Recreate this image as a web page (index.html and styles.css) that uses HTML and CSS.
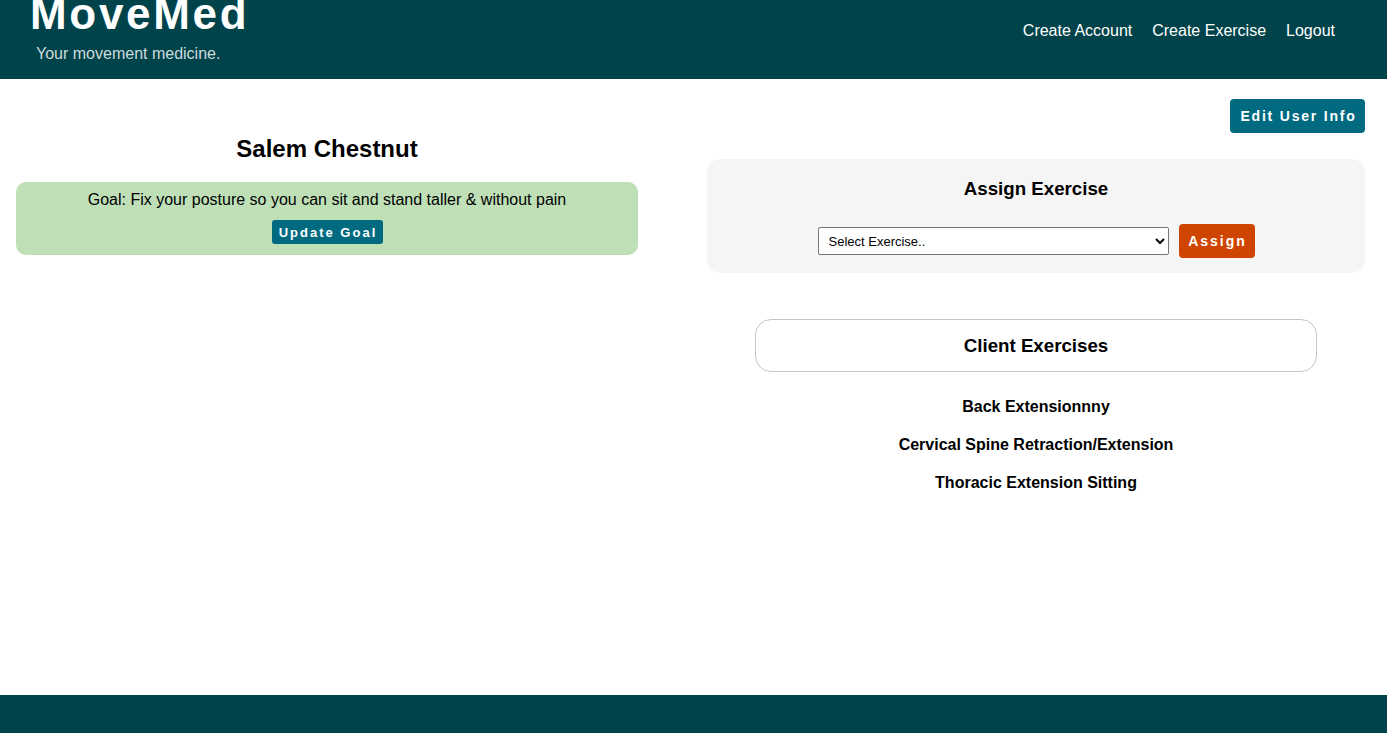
FILE: index.html
```html
<!DOCTYPE html>
<html lang="en">
<head>
<meta charset="utf-8">
<title>MoveMed</title>
<link rel="stylesheet" href="styles.css">
</head>
<body>
<header class="site-header">
  <div class="brand">
    <h1 class="brand-title">MoveMed</h1>
    <p class="brand-tag">Your movement medicine.</p>
  </div>
  <nav class="nav">
    <a href="#" class="nav-link">Create Account</a>
    <a href="#" class="nav-link">Create Exercise</a>
    <a href="#" class="nav-link">Logout</a>
  </nav>
</header>

<main class="main">
  <section class="col-left">
    <h2 class="client-name">Salem Chestnut</h2>
    <div class="goal-box">
      <p class="goal-text">Goal: Fix your posture so you can sit and stand taller &amp; without pain</p>
      <button class="btn btn-teal btn-small">Update Goal</button>
    </div>
  </section>

  <section class="col-right">
    <div class="edit-row">
      <button class="btn btn-teal btn-edit">Edit User Info</button>
    </div>
    <div class="assign-box">
      <h3 class="section-title">Assign Exercise</h3>
      <div class="assign-row">
        <select class="exercise-select">
          <option>Select Exercise..</option>
          <option>Back Extensionnny</option>
          <option>Cervical Spine Retraction/Extension</option>
          <option>Thoracic Extension Sitting</option>
        </select>
        <button class="btn btn-orange">Assign</button>
      </div>
    </div>
    <div class="client-box">
      <h3 class="section-title">Client Exercises</h3>
    </div>
    <ul class="exercise-list">
      <li class="exercise-item">Back Extensionnny</li>
      <li class="exercise-item">Cervical Spine Retraction/Extension</li>
      <li class="exercise-item">Thoracic Extension Sitting</li>
    </ul>
  </section>
</main>

<footer class="site-footer"></footer>
</body>
</html>
```

FILE: styles.css
```css
* { box-sizing: border-box; }

html, body { height: 100%; }

body {
  margin: 0;
  font-family: "Liberation Sans", Arial, sans-serif;
  color: #000;
  background: #fff;
  display: flex;
  flex-direction: column;
  min-height: 100vh;
  overflow: hidden;
}

.site-header {
  height: 79px;
  background: #00434a;
  display: flex;
  justify-content: space-between;
  align-items: flex-start;
  padding: 0 52px 0 30px;
  overflow: hidden;
  flex-shrink: 0;
}

.brand-title {
  margin: -8px 0 0 0;
  font-size: 44px;
  line-height: 44px;
  font-weight: 700;
  letter-spacing: 2.7px;
  color: #fff;
}

.brand-tag {
  margin: 8px 0 0 6px;
  font-size: 16px;
  line-height: 19px;
  color: #cddcdc;
}

.nav {
  display: flex;
  gap: 20px;
  padding-top: 22px;
}

.nav-link {
  color: #fff;
  text-decoration: none;
  font-size: 16px;
  line-height: 18px;
}

.main {
  flex: 1;
  display: flex;
  padding: 0 22px 0 0;
  gap: 53px;
}

.col-left {
  width: 654px;
  padding: 0 16px;
  flex-shrink: 0;
}

.client-name {
  margin: 56px 0 19px;
  text-align: center;
  font-size: 24px;
  line-height: 28px;
  font-weight: 700;
}

.goal-box {
  background: #bfe0b7;
  border-radius: 10px;
  padding: 9px 10px 11px;
  text-align: center;
}

.goal-text {
  margin: 0 0 11px;
  font-size: 16px;
  line-height: 18px;
}

.btn {
  border: none;
  color: #fff;
  font-family: "Liberation Sans", Arial, sans-serif;
  font-weight: 700;
  cursor: pointer;
}

.btn-teal { background: #006b80; }

.btn-orange {
  background: #cf4500;
  height: 34px;
  width: 76px;
  font-size: 14px;
  letter-spacing: 2px;
  border-radius: 4px;
  padding: 0 0 0 2px;
}

.btn-small {
  height: 24px;
  width: 111px;
  font-size: 13px;
  letter-spacing: 2px;
  border-radius: 3px;
  padding: 0 0 0 2px;
  display: inline-block;
  vertical-align: top;
}

.col-right {
  flex: 1;
  display: flex;
  flex-direction: column;
  align-items: center;
}

.edit-row {
  align-self: stretch;
  display: flex;
  justify-content: flex-end;
  margin-top: 20px;
}

.btn-edit {
  height: 34px;
  width: 135px;
  font-size: 14px;
  letter-spacing: 1.8px;
  border-radius: 4px;
  padding: 0 0 0 2px;
}

.assign-box {
  align-self: stretch;
  margin-top: 26px;
  background: #f5f5f5;
  border-radius: 14px;
  padding: 19px 0 15px;
  text-align: center;
}

.section-title {
  margin: 0;
  font-size: 18.72px;
  line-height: 22px;
  font-weight: 700;
}

.assign-row {
  display: flex;
  justify-content: center;
  align-items: center;
  gap: 10px;
  margin-top: 24px;
}

.exercise-select {
  width: 351px;
  height: 28px;
  font-family: "Liberation Sans", Arial, sans-serif;
  font-size: 13px;
  color: #000;
  background: #fff;
  border: 1px solid #767676;
  border-radius: 2px;
  padding: 0 6px;
}

.client-box {
  width: 562px;
  margin-top: 46px;
  border: 1px solid #c6c6c6;
  border-radius: 16px;
  height: 53px;
  display: flex;
  align-items: center;
  justify-content: center;
}

.exercise-list {
  list-style: none;
  margin: 26px 0 0;
  padding: 0;
  text-align: center;
}

.exercise-item {
  font-size: 16px;
  line-height: 18px;
  font-weight: 700;
  margin-bottom: 20px;
}

.site-footer {
  height: 38px;
  background: #00434a;
  flex-shrink: 0;
}
```
